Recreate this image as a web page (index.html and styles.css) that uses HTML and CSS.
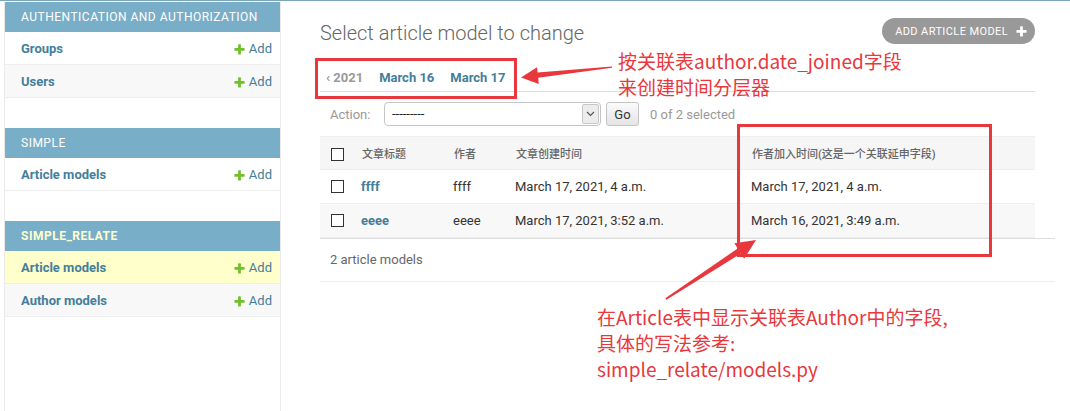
FILE: index.html
```html
<!DOCTYPE html>
<html lang="zh-CN">
<head>
<meta charset="utf-8">
<title>Select article model to change</title>
<link rel="stylesheet" href="styles.css">
</head>
<body>
<div class="topline"></div>
<div class="main">
  <div class="toggle"></div>
  <nav class="sidebar">
    <div class="app">
      <div class="app-caption">Authentication and Authorization</div>
      <div class="app-row"><a class="model">Groups</a><a class="addlink"><svg width="13" height="13" viewBox="0 0 1792 1792"><path fill="#70bf2b" d="M1600 796v192q0 40-28 68t-68 28h-416v416q0 40-28 68t-68 28h-192q-40 0-68-28t-28-68v-416h-416q-40 0-68-28t-28-68v-192q0-40 28-68t68-28h416v-416q0-40 28-68t68-28h192q40 0 68 28t28 68v416h416q40 0 68 28t28 68z"/></svg>Add</a></div>
      <div class="app-row even"><a class="model">Users</a><a class="addlink"><svg width="13" height="13" viewBox="0 0 1792 1792"><path fill="#70bf2b" d="M1600 796v192q0 40-28 68t-68 28h-416v416q0 40-28 68t-68 28h-192q-40 0-68-28t-28-68v-416h-416q-40 0-68-28t-28-68v-192q0-40 28-68t68-28h416v-416q0-40 28-68t68-28h192q40 0 68 28t28 68v416h416q40 0 68 28t28 68z"/></svg>Add</a></div>
    </div>
    <div class="app">
      <div class="app-caption">Simple</div>
      <div class="app-row"><a class="model">Article models</a><a class="addlink"><svg width="13" height="13" viewBox="0 0 1792 1792"><path fill="#70bf2b" d="M1600 796v192q0 40-28 68t-68 28h-416v416q0 40-28 68t-68 28h-192q-40 0-68-28t-28-68v-416h-416q-40 0-68-28t-28-68v-192q0-40 28-68t68-28h416v-416q0-40 28-68t68-28h192q40 0 68 28t28 68v416h416q40 0 68 28t28 68z"/></svg>Add</a></div>
    </div>
    <div class="app">
      <div class="app-caption current">Simple_relate</div>
      <div class="app-row selected"><a class="model">Article models</a><a class="addlink"><svg width="13" height="13" viewBox="0 0 1792 1792"><path fill="#70bf2b" d="M1600 796v192q0 40-28 68t-68 28h-416v416q0 40-28 68t-68 28h-192q-40 0-68-28t-28-68v-416h-416q-40 0-68-28t-28-68v-192q0-40 28-68t68-28h416v-416q0-40 28-68t68-28h192q40 0 68 28t28 68v416h416q40 0 68 28t28 68z"/></svg>Add</a></div>
      <div class="app-row even"><a class="model">Author models</a><a class="addlink"><svg width="13" height="13" viewBox="0 0 1792 1792"><path fill="#70bf2b" d="M1600 796v192q0 40-28 68t-68 28h-416v416q0 40-28 68t-68 28h-192q-40 0-68-28t-28-68v-416h-416q-40 0-68-28t-28-68v-192q0-40 28-68t68-28h416v-416q0-40 28-68t68-28h192q40 0 68 28t28 68v416h416q40 0 68 28t28 68z"/></svg>Add</a></div>
    </div>
  </nav>
  <div class="content">
    <div class="content-head">
      <h1>Select article model to change</h1>
      <a class="add-btn">Add article model<svg width="13" height="13" viewBox="0 0 1792 1792"><path fill="#fff" d="M1600 796v192q0 40-28 68t-68 28h-416v416q0 40-28 68t-68 28h-192q-40 0-68-28t-28-68v-416h-416q-40 0-68-28t-28-68v-192q0-40 28-68t68-28h416v-416q0-40 28-68t68-28h192q40 0 68 28t28 68v416h416q40 0 68 28t28 68z"/></svg></a>
    </div>
    <ul class="toplinks">
      <li class="date-back">&lsaquo; 2021</li>
      <li><a>March 16</a></li>
      <li><a>March 17</a></li>
    </ul>
    <div class="actions">
      <span class="action-label">Action:</span>
      <div class="select"><span class="select-text">---------</span><span class="select-arrow"><svg width="9" height="6" viewBox="0 0 9 6"><path d="M1 1l3.5 3.5L8 1" fill="none" stroke="#555" stroke-width="1.2"/></svg></span></div>
      <button class="go">Go</button>
      <span class="counter">0 of 2 selected</span>
    </div>
    <table class="results">
      <colgroup><col class="c1"><col class="c2"><col class="c3"><col class="c4"><col></colgroup>
      <thead>
        <tr><th><input type="checkbox" class="cb"></th><th>文章标题</th><th>作者</th><th>文章创建时间</th><th>作者加入时间(这是一个关联延申字段)</th></tr>
      </thead>
      <tbody>
        <tr><td><input type="checkbox" class="cb"></td><td><a class="obj">ffff</a></td><td>ffff</td><td>March 17, 2021, 4 a.m.</td><td>March 17, 2021, 4 a.m.</td></tr>
        <tr><td><input type="checkbox" class="cb"></td><td><a class="obj">eeee</a></td><td>eeee</td><td>March 17, 2021, 3:52 a.m.</td><td>March 16, 2021, 3:49 a.m.</td></tr>
      </tbody>
    </table>
    <div class="paginator">2 article models</div>
  </div>
</div>
<div class="annotations">
  <svg class="marks" width="1070" height="411" viewBox="0 0 1070 411">
    <rect x="316.5" y="59.5" width="199" height="38" fill="none" stroke="#e8383d" stroke-width="3"/>
    <rect x="738.5" y="125.5" width="252" height="130" fill="none" stroke="#e8383d" stroke-width="3"/>
    <polygon fill="#e8383d" points="612,66.4 537.6,72.6 537,67.3 521,77.5 538.8,84 538.2,77.8 612,67.8"/>
    <polygon fill="#e8383d" points="666.5,299.8 740.9,253.5 744.2,258.8 756,240 734.4,243.3 737.7,248.5 665.3,298.2"/>
  </svg>
  <div class="note note-date">按关联表author.date_joined字段<br>来创建时间分层器</div>
  <div class="note note-field">在Article表中显示关联表Author中的字段,<br>具体的写法参考:<br>simple_relate/models.py</div>
</div>
</body>
</html>
```

FILE: styles.css
```css
* { box-sizing: border-box; }
html, body { margin: 0; padding: 0; }
body {
  position: relative;
  width: 1070px;
  height: 411px;
  overflow: hidden;
  background: #fff;
  color: #333;
  font-family: Roboto, "Noto Sans CJK SC", sans-serif;
  font-size: 13px;
}
a { color: #447e9b; text-decoration: none; }

.topline { height: 1px; background: #7aa5ba; }

.main { display: flex; min-height: 410px; }
.toggle { flex: 0 0 5px; border-right: 1px solid #eaeaea; }

.sidebar {
  flex: 0 0 276px;
  border-right: 1px solid #eaeaea;
  border-top: 1px solid transparent;
}
.app { margin-bottom: 30px; }
.app-caption {
  padding: 8px 8px 8px 16px;
  background: #79aec8;
  color: #fff;
  font-size: 12px;
  line-height: 14px;
  letter-spacing: 0.5px;
  text-transform: uppercase;
}
.app-caption.current { color: #ffc; font-weight: bold; }
.app-row {
  display: flex;
  justify-content: space-between;
  padding: 9px 8px 7px 16px;
  line-height: 16px;
  border-bottom: 1px solid #eee;
  background: #fff;
}
.app-row.even { background: #f8f8f8; }
.app-row.selected { background: #ffc; }
.model { font-weight: bold; }
.addlink { display: flex; align-items: center; }
.addlink svg { margin-right: 3px; }

.content { flex: 1; padding: 20px 35px 0 39px; }
.content-head { display: flex; justify-content: space-between; align-items: flex-start; margin-bottom: 20px; }
h1 { margin: 0; font-size: 20px; line-height: 24px; font-weight: 300; color: #666; }
.add-btn {
  display: flex;
  align-items: center;
  gap: 7px;
  height: 26px;
  margin-top: -3px;
  padding: 0 7px 0 13px;
  border-radius: 13px;
  background: #999;
  color: #fff;
  font-size: 11px;
  letter-spacing: 0.4px;
  text-transform: uppercase;
}

.toplinks {
  display: flex;
  gap: 4px;
  margin: 0;
  padding: 0;
  list-style: none;
  border-bottom: 1px solid #ddd;
}
.toplinks li { padding: 3px 6px; font-weight: bold; line-height: 20px; }
.toplinks .date-back { color: #999; }

.actions {
  display: flex;
  align-items: center;
  height: 44px;
  padding: 10px;
  color: #999;
}
.action-label { width: 54px; }
.select {
  display: flex;
  align-items: stretch;
  width: 217px;
  height: 24px;
  border: 1px solid #c4c4c4;
  border-radius: 4px;
  background: #fff;
  color: #222;
  padding: 1px;
}
.select-text { flex: 1; padding-left: 6px; line-height: 20px; }
.select-arrow {
  width: 17px;
  display: flex;
  align-items: center;
  justify-content: center;
  background: #ececec;
  border: 1px solid #c8c8c8;
  border-radius: 2px;
}
.go {
  margin-left: 5px;
  width: 33px;
  height: 24px;
  padding: 0;
  border: 1px solid #c4c4c4;
  border-radius: 3px;
  background: linear-gradient(#fbfbfb, #e4e4e4);
  color: #333;
  font-family: Roboto, sans-serif;
  font-size: 13px;
}
.counter { margin-left: 11px; }

.results {
  width: 715px;
  table-layout: fixed;
  border-collapse: separate;
  border-spacing: 0;
}
.c1 { width: 31px; }
.c2 { width: 92px; }
.c3 { width: 62px; }
.c4 { width: 236px; }
.results th {
  padding: 10px 10px 6px 11px;
  line-height: 16px;
  background: #f6f6f6;
  border-top: 1px solid #eee;
  border-bottom: 1px solid #eee;
  color: #666;
  font-size: 11px;
  font-weight: 500;
  text-align: left;
  white-space: nowrap;
}
.results th:first-child { padding-top: 9px; padding-bottom: 7px; }
.results td {
  padding: 8px 10px;
  line-height: 17px;
  border-bottom: 1px solid #eee;
  white-space: nowrap;
  vertical-align: middle;
}
.results tbody tr:nth-child(even) td { background: #f8f8f8; }
.results th:first-child, .results td:first-child { padding-left: 11px; padding-right: 0; }
.cb {
  -webkit-appearance: none;
  appearance: none;
  display: block;
  width: 13px;
  height: 13px;
  margin: 0;
  border: 1px solid #333;
  border-radius: 0;
  background: #fff;
}
.obj { font-weight: bold; }

.paginator {
  margin-right: -20px;
  padding: 10px;
  line-height: 22px;
  border-top: 1px solid #ddd;
  border-bottom: 1px solid #eee;
  color: #666;
}

.annotations {
  position: absolute;
  top: 0;
  left: 0;
  width: 1070px;
  height: 411px;
  pointer-events: none;
}
.marks { position: absolute; top: 0; left: 0; }
.note {
  position: absolute;
  color: #e8383d;
  font-family: "Noto Sans CJK SC", sans-serif;
  font-size: 19px;
  line-height: 26px;
  font-weight: 400;
  white-space: nowrap;
}
.note-date { left: 618px; top: 48px; }
.note-field { left: 597px; top: 304px; }
```
